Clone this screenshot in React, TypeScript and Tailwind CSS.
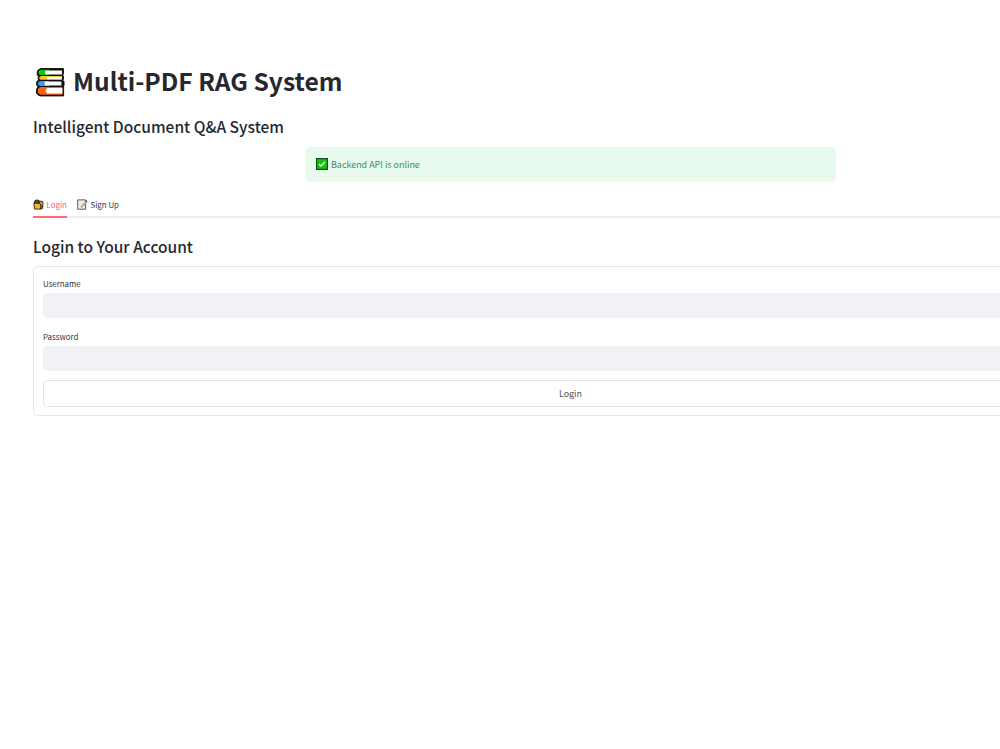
function BooksIcon() {
  return (
    <svg className="mt-px h-[30px] w-[30px] shrink-0" viewBox="0 0 30 30" strokeLinejoin="round">
      <path d="M6 1.6H28.4V7.2L27.4 8L28.4 9V12.4L27.4 13.4L29 14.2V18.2L28.6 19V28.9H5.6Q1.4 28.4 1.4 24.2Q1.4 21.4 3 19.8Q1.4 18.4 1.5 16.2Q1.7 13.9 3.6 13Q2.6 11.6 3.4 9.6Q2 8 2.1 5.6Q2.6 2.2 6 1.6Z" fill="#111" stroke="#111" strokeWidth="1" />
      <path d="M6.5 2.7H14V8H5.5Q3.4 7.6 3.4 5.4Q3.6 3 6.5 2.7Z" fill="#16c60c" />
      <path d="M11 3.4H27V7.4H11Q9 5.4 11 3.4Z" fill="#fff" />
      <path d="M6 8.9H27V12.8H6Q4.2 12.4 4.2 10.9Q4.4 9.2 6 8.9Z" fill="#ffc629" />
      <path d="M12.5 9.9H26.6V12.2H12.5Q11.3 11 12.5 9.9Z" fill="#fff" />
      <path d="M5.6 14H14V18.9H5.2Q2.8 18.5 2.8 16.4Q3 14.4 5.6 14Z" fill="#3a9ee8" />
      <path d="M10.5 14.5H26.4V18.5H10.5Q8.5 16.5 10.5 14.5Z" fill="#fff" />
      <path d="M6 20.1H27.4V27.7H6Q2.7 27.2 2.7 24Q2.8 20.6 6 20.1Z" fill="#ff6216" />
      <path d="M12.3 21H27.4V26.6H12.3Q9 23.8 12.3 21Z" fill="#fff" />
    </svg>
  );
}

function CheckIcon() {
  return (
    <svg className="mb-px h-[12px] w-[12px] shrink-0" viewBox="0 0 12 12">
      <rect x=".6" y=".6" width="10.8" height="10.8" fill="#13c60c" stroke="#14501a" strokeWidth="1.2" />
      <path d="M3 6.2L5 8.2L9 3.8" fill="none" stroke="#fff" strokeWidth="1.2" />
    </svg>
  );
}

function LockIcon() {
  return (
    <svg className="h-[11px] w-[11px] shrink-0" viewBox="0 0 11 11">
      <path d="M1.6 4.2V2.8Q2 1 4.2 1Q6 1 6.4 2.3L5.4 4.2Z" fill="#555" stroke="#222" strokeWidth="1.1" />
      <path d="M.8 4.2H8V10.1H1.6Z" fill="#fcb526" stroke="#33240a" strokeWidth=".9" />
      <path d="M6 3.1Q7.6 1.4 9.5 2.6Q10.8 4.2 9.7 5.8V9.2L8 10V5.8Q6 5 6 3.1Z" fill="#e29a1c" stroke="#222" strokeWidth="1" />
    </svg>
  );
}

function MemoIcon() {
  return (
    <svg className="h-[11px] w-[11px] shrink-0" viewBox="0 0 11 11">
      <path d="M.7 .9H8.6V10.2H.7Z" fill="#f5f5f5" stroke="#444" strokeWidth=".9" />
      <path d="M2.2 3H6.3M2.2 5H5M2.2 7H4" stroke="#ccc" strokeWidth=".6" />
      <path d="M4.4 7L8.4 2.3L9.6 3.3L5.6 7.9L4 8.5Z" fill="#d9c08c" stroke="#666" strokeWidth=".4" />
      <path d="M8.5 2.3L9.4 1.1L10.6 2.2L9.7 3.3Z" fill="#555" />
    </svg>
  );
}

function Field({ label }: { label: string }) {
  return (
    <label className="block">
      <span className="block h-4 text-[7.9px] leading-[13px]">{label}</span>
      <input className="block h-[25px] w-full rounded-[5px] bg-[#f0f2f6] px-2 text-[9px] outline-none" />
    </label>
  );
}

export default function App() {
  return (
    <main className="h-[749px] w-full overflow-hidden bg-white font-['Noto_Sans_CJK_SC','Noto_Sans',sans-serif] text-[#31333f]">
      <div className="ml-[33px] w-[1075px] whitespace-nowrap pt-[61px]">
        <h1 className="flex h-10 items-center pl-[2px] text-[24.6px] font-bold leading-[38px] text-[#262730]">
          <BooksIcon />
          <span className="ml-[8px] pb-[2px]">Multi-PDF RAG System</span>
        </h1>
        <h3 className="mt-[13px] h-6 text-[15.55px] font-medium leading-6 text-[#262730]">
          Intelligent Document Q&amp;A System
        </h3>
        <div className="ml-[272px] mt-[9px] flex h-[35px] w-[531px] items-center rounded-[5px] bg-[#e8f9ee] pl-[11px] text-[8.95px] text-[#438d66]">
          <CheckIcon />
          <span className="ml-[3px]">Backend API is online</span>
        </div>
        <div className="mt-[10px] flex h-[26px] gap-[10px] border-b-2 border-[#ebecee] text-[7.9px]">
          <button className="flex h-[26px] w-[34px] items-center border-b-2 border-[#ff6b6e] text-[#ff5c60]">
            <LockIcon />
            <span className="ml-[2.5px] pt-px">Login</span>
          </button>
          <button className="flex h-[24px] items-center">
            <MemoIcon />
            <span className="ml-[2.5px] pt-px">Sign Up</span>
          </button>
        </div>
        <h3 className="mt-[16px] h-6 text-[15.5px] font-medium leading-6 text-[#262730]">
          Login to Your Account
        </h3>
        <form className="mt-2 h-[150px] rounded-[5px] border border-[#e6e7ea] px-[9px] pt-[10px]">
          <Field label="Username" />
          <div className="mt-3">
            <Field label="Password" />
          </div>
          <button type="button" className="mt-[9px] flex h-[27px] w-full items-center justify-center rounded-[5px] border border-[#e3e4e8] text-[8.9px] leading-[15px] text-[#4b4d57]">
            Login
          </button>
        </form>
      </div>
    </main>
  );
}
